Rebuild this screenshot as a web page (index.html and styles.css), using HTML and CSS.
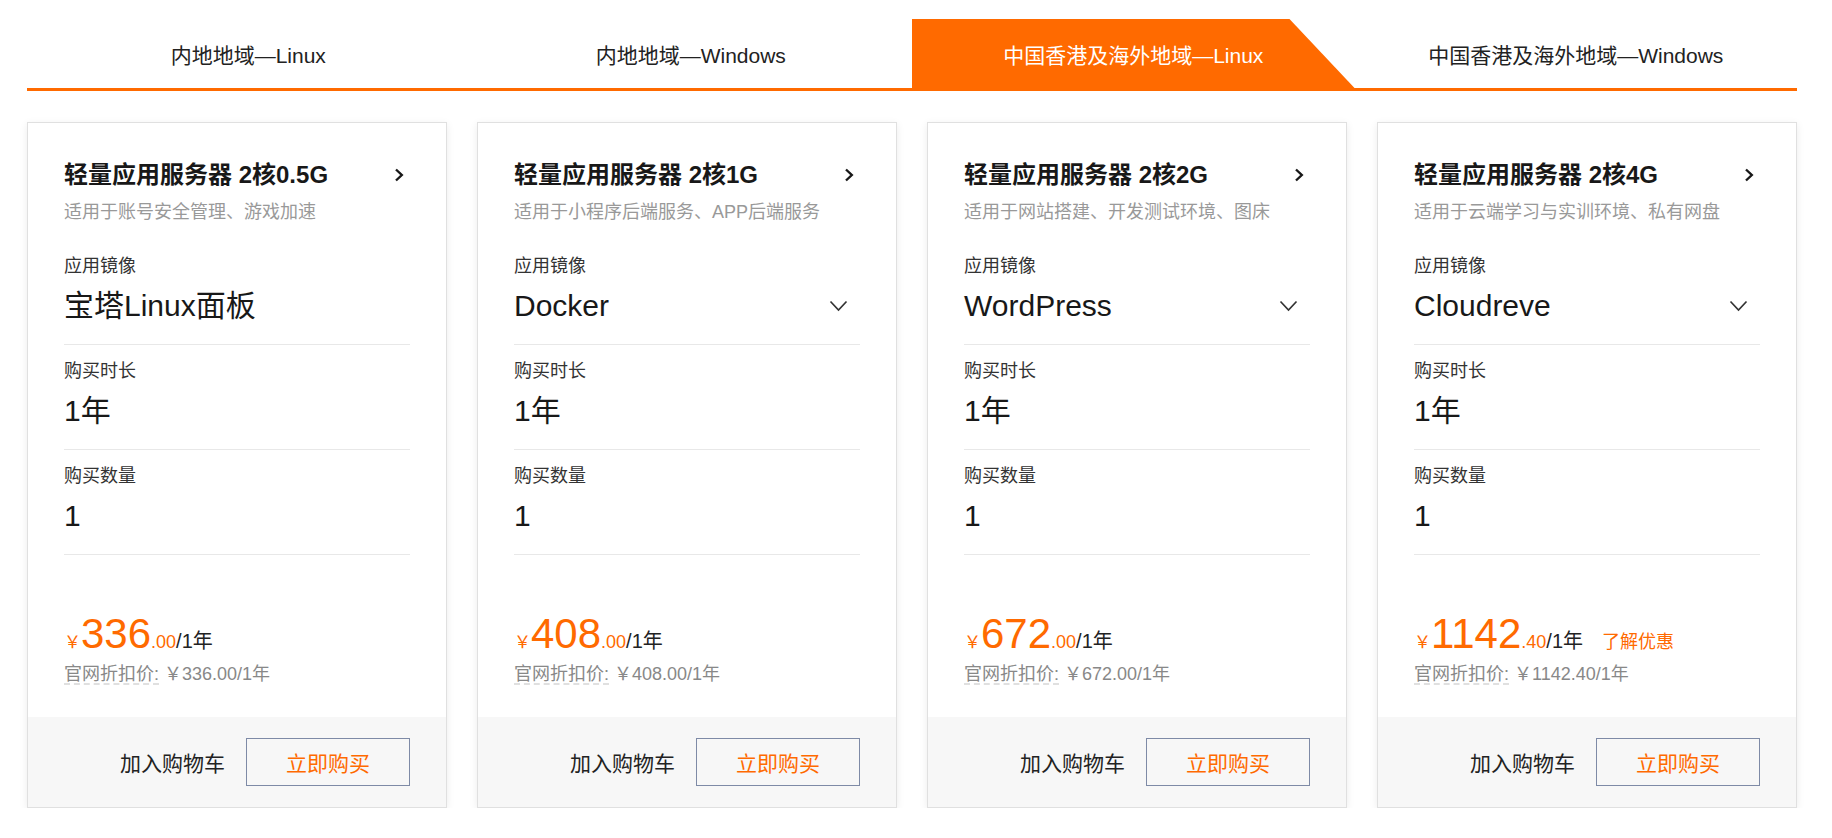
FILE: index.html
```html
<!DOCTYPE html>
<html lang="zh-CN">
<head>
<meta charset="utf-8">
<title>轻量应用服务器</title>
<link rel="stylesheet" href="styles.css">
</head>
<body>
<div class="page">
  <div class="tabs">
    <div class="tab">内地地域—Linux</div>
    <div class="tab">内地地域—Windows</div>
    <div class="tab active">中国香港及海外地域—Linux</div>
    <div class="tab">中国香港及海外地域—Windows</div>
  </div>

  <div class="cards">
    <div class="card">
      <div class="card-body">
        <div class="card-head">
          <div class="title-row"><span class="title">轻量应用服务器 2核0.5G</span><svg class="arrow" width="10" height="14" viewBox="0 0 10 14"><path d="M2 1.5 L7.8 7 L2 12.5" fill="none" stroke="#181818" stroke-width="2.4"/></svg></div>
          <div class="subtitle">适用于账号安全管理、游戏加速</div>
        </div>
        <div class="field"><div class="label">应用镜像</div><div class="value">宝塔Linux面板</div></div>
        <div class="field"><div class="label">购买时长</div><div class="value">1年</div></div>
        <div class="field"><div class="label">购买数量</div><div class="value">1</div></div>
        <div class="price-row"><span class="cur">￥</span><span class="int">336</span><span class="dec">.00</span><span class="per">/1年</span></div>
        <div class="orig"><span class="u">官网折扣价:</span> ￥336.00/1年</div>
      </div>
      <div class="card-foot"><span class="cart">加入购物车</span><span class="buy">立即购买</span></div>
    </div>

    <div class="card">
      <div class="card-body">
        <div class="card-head">
          <div class="title-row"><span class="title">轻量应用服务器 2核1G</span><svg class="arrow" width="10" height="14" viewBox="0 0 10 14"><path d="M2 1.5 L7.8 7 L2 12.5" fill="none" stroke="#181818" stroke-width="2.4"/></svg></div>
          <div class="subtitle">适用于小程序后端服务、APP后端服务</div>
        </div>
        <div class="field"><div class="label">应用镜像</div><div class="value"><span>Docker</span><svg class="drop" width="19" height="12" viewBox="0 0 19 12"><path d="M1.5 1.5 L9.5 10 L17.5 1.5" fill="none" stroke="#333" stroke-width="1.7"/></svg></div></div>
        <div class="field"><div class="label">购买时长</div><div class="value">1年</div></div>
        <div class="field"><div class="label">购买数量</div><div class="value">1</div></div>
        <div class="price-row"><span class="cur">￥</span><span class="int">408</span><span class="dec">.00</span><span class="per">/1年</span></div>
        <div class="orig"><span class="u">官网折扣价:</span> ￥408.00/1年</div>
      </div>
      <div class="card-foot"><span class="cart">加入购物车</span><span class="buy">立即购买</span></div>
    </div>

    <div class="card">
      <div class="card-body">
        <div class="card-head">
          <div class="title-row"><span class="title">轻量应用服务器 2核2G</span><svg class="arrow" width="10" height="14" viewBox="0 0 10 14"><path d="M2 1.5 L7.8 7 L2 12.5" fill="none" stroke="#181818" stroke-width="2.4"/></svg></div>
          <div class="subtitle">适用于网站搭建、开发测试环境、图床</div>
        </div>
        <div class="field"><div class="label">应用镜像</div><div class="value"><span>WordPress</span><svg class="drop" width="19" height="12" viewBox="0 0 19 12"><path d="M1.5 1.5 L9.5 10 L17.5 1.5" fill="none" stroke="#333" stroke-width="1.7"/></svg></div></div>
        <div class="field"><div class="label">购买时长</div><div class="value">1年</div></div>
        <div class="field"><div class="label">购买数量</div><div class="value">1</div></div>
        <div class="price-row"><span class="cur">￥</span><span class="int">672</span><span class="dec">.00</span><span class="per">/1年</span></div>
        <div class="orig"><span class="u">官网折扣价:</span> ￥672.00/1年</div>
      </div>
      <div class="card-foot"><span class="cart">加入购物车</span><span class="buy">立即购买</span></div>
    </div>

    <div class="card">
      <div class="card-body">
        <div class="card-head">
          <div class="title-row"><span class="title">轻量应用服务器 2核4G</span><svg class="arrow" width="10" height="14" viewBox="0 0 10 14"><path d="M2 1.5 L7.8 7 L2 12.5" fill="none" stroke="#181818" stroke-width="2.4"/></svg></div>
          <div class="subtitle">适用于云端学习与实训环境、私有网盘</div>
        </div>
        <div class="field"><div class="label">应用镜像</div><div class="value"><span>Cloudreve</span><svg class="drop" width="19" height="12" viewBox="0 0 19 12"><path d="M1.5 1.5 L9.5 10 L17.5 1.5" fill="none" stroke="#333" stroke-width="1.7"/></svg></div></div>
        <div class="field"><div class="label">购买时长</div><div class="value">1年</div></div>
        <div class="field"><div class="label">购买数量</div><div class="value">1</div></div>
        <div class="price-row"><span class="cur">￥</span><span class="int">1142</span><span class="dec">.40</span><span class="per">/1年</span><span class="promo">了解优惠</span></div>
        <div class="orig"><span class="u">官网折扣价:</span> ￥1142.40/1年</div>
      </div>
      <div class="card-foot"><span class="cart">加入购物车</span><span class="buy">立即购买</span></div>
    </div>
  </div>
</div>
</body>
</html>
```

FILE: styles.css
```css
html, body {
  margin: 0;
  padding: 0;
  background: #ffffff;
}

body {
  font-family: "Liberation Sans", "Noto Sans CJK SC", sans-serif;
  color: #181818;
}

.page {
  width: 1770px;
  padding: 19px 0 0 27px;
}

.tabs {
  display: flex;
  border-bottom: 3px solid #ff6a00;
}

.tab {
  flex: 1;
  height: 65px;
  padding-top: 4px;
  line-height: 65px;
  text-align: center;
  font-size: 21px;
  color: #222222;
  white-space: nowrap;
}

.tab.active {
  background: #ff6a00;
  color: #ffffff;
  clip-path: polygon(0 0, calc(100% - 65px) 0, 100% 100%, 0 100%);
}

.cards {
  display: flex;
  gap: 30px;
  margin-top: 31px;
}

.card {
  width: 420px;
  box-sizing: border-box;
  border: 1px solid #e0e0e0;
  background: #ffffff;
  box-shadow: 0 2px 8px rgba(0, 0, 0, 0.08);
}

.card-body {
  padding: 35.5px 36px 31.5px;
}

.card-head {
  margin-bottom: 16px;
}

.title-row {
  display: flex;
  justify-content: space-between;
  align-items: center;
  height: 32px;
}

.title {
  font-size: 24px;
  font-weight: bold;
  line-height: 32px;
  color: #181818;
  white-space: nowrap;
}

.arrow {
  margin-right: 6px;
}

.subtitle {
  margin-top: 9px;
  font-size: 18px;
  line-height: 24px;
  color: #999999;
  white-space: nowrap;
}

.field {
  padding: 14px 0 18px;
  border-bottom: 1px solid #e8e8e8;
}

.label {
  font-size: 18px;
  line-height: 24px;
  color: #333333;
}

.value {
  margin-top: 8px;
  height: 40px;
  font-size: 30px;
  line-height: 40px;
  color: #181818;
  display: flex;
  justify-content: space-between;
  align-items: center;
}

.drop {
  margin-right: 12px;
}

.price-row {
  margin-top: 57px;
  display: flex;
  align-items: baseline;
  color: #ff6a00;
  white-space: nowrap;
}

.cur {
  font-size: 17px;
  line-height: 20px;
}

.int {
  font-size: 42px;
  line-height: 44px;
}

.dec {
  font-size: 18px;
  line-height: 22px;
}

.per {
  font-size: 20px;
  line-height: 24px;
  color: #222222;
}

.promo {
  margin-left: 19px;
  font-size: 18px;
  line-height: 24px;
  color: #ff6a00;
}

.orig {
  margin-top: 6px;
  font-size: 18px;
  line-height: 24px;
  color: #888888;
  white-space: nowrap;
}

.orig .u {
  text-decoration: underline dashed #e0e0e0;
  text-underline-offset: 4px;
}

.card-foot {
  height: 90px;
  padding: 0 36px;
  background: #f7f7f7;
  display: flex;
  justify-content: flex-end;
  align-items: center;
  gap: 21px;
}

.cart {
  font-size: 21px;
  color: #222222;
}

.buy {
  width: 164px;
  height: 48px;
  box-sizing: border-box;
  border: 1px solid #7e8aa6;
  display: flex;
  align-items: center;
  justify-content: center;
  font-size: 21px;
  color: #ff6a00;
}
```
